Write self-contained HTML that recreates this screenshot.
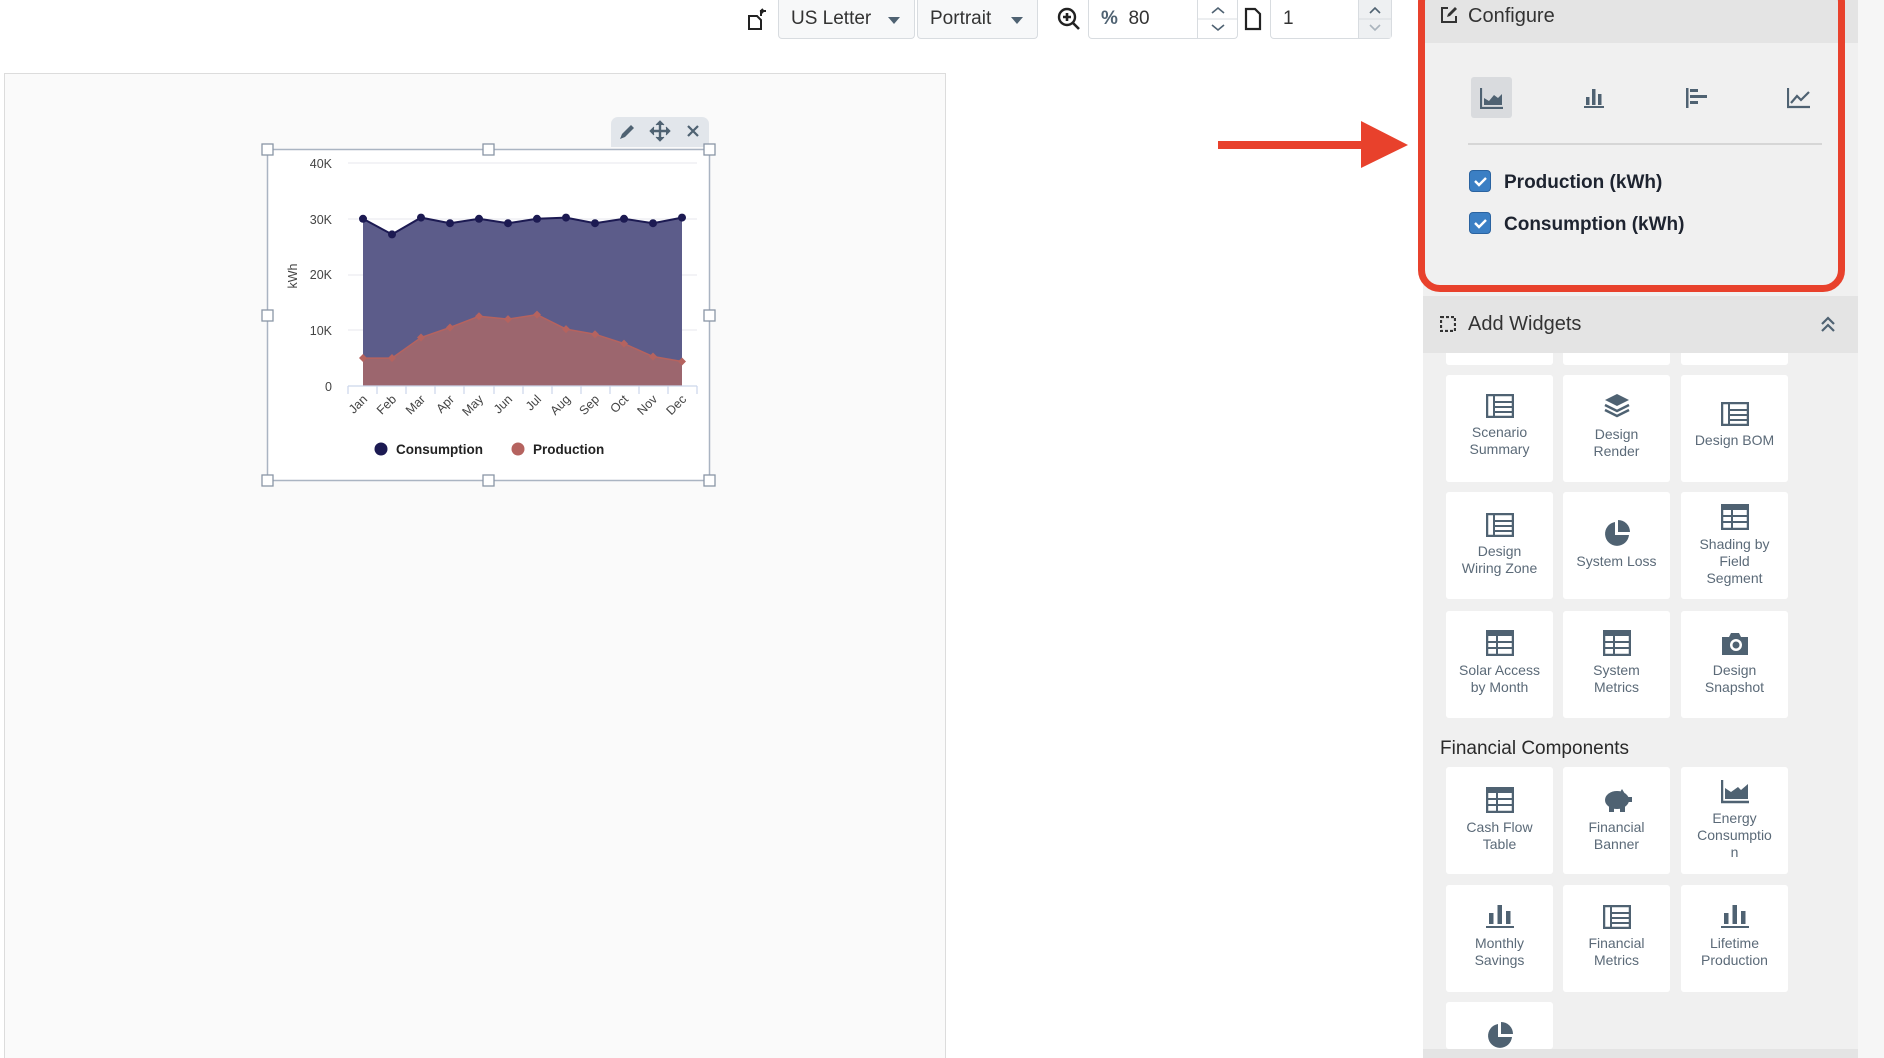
<!DOCTYPE html>
<html><head><meta charset="utf-8">
<style>
*{box-sizing:border-box;margin:0;padding:0}
html,body{width:1884px;height:1058px;overflow:hidden}
body{background:#fff;font-family:"Liberation Sans",sans-serif;position:relative;color:#333}
#wrap{position:relative;width:1884px;height:1058px;overflow:hidden}
.abs{position:absolute}
.page{left:4px;top:73px;width:942px;height:985px;background:#fafafa;border:1px solid #dcdcdc;border-bottom:none}
.dd{top:0;height:39px;border:1px solid #d8dce0;border-top:none;border-radius:0 0 4px 4px;background:#f7f8f9;font-size:19px;color:#333;padding:8px 0 0 12px}
.caret{position:absolute;right:14px;top:17px;width:0;height:0;border-left:6px solid transparent;border-right:6px solid transparent;border-top:7px solid #4f6272}
.inp{top:0;height:39px;border:1px solid #d8dce0;border-top:none;border-radius:0 0 4px 4px;background:#fff;font-size:19px;padding:8px 0 0 12px}
.spin{position:absolute;right:0;top:0;width:33px;height:38px;border-left:1px solid #d8dce0}
.side{left:1423px;top:0;width:435px;height:1058px;background:#f0f0f0}
.tile{position:absolute;width:107px;height:107px;background:#fff;border-radius:3px;text-align:center;font-size:14px;line-height:17px;color:#5b6a78}
.tile svg{display:block;margin:0 auto 6px}
.ic{fill:#4f6272}
</style></head><body><div id="wrap">
<div class="abs" style="left:1858px;top:0;width:26px;height:1058px;background:#f6f6f6"></div>
<div class="abs page"></div>

<svg class="abs" style="left:746px;top:8px" width="24" height="22" viewBox="0 0 24 22"><path d="M3 8h8l4 4v9H3z" fill="none" stroke="#222" stroke-width="2"/><path d="M15 8V3h5M17 1l-2 2 2 2" fill="none" stroke="#222" stroke-width="2"/></svg>
<div class="abs dd" style="left:778px;width:137px">US Letter<span class="caret"></span></div>
<div class="abs dd" style="left:917px;width:121px">Portrait<span class="caret"></span></div>
<svg class="abs" style="left:1057px;top:7px" width="24" height="24" viewBox="0 0 24 24"><circle cx="10" cy="10" r="8" fill="none" stroke="#222" stroke-width="2.4"/><path d="M10 6v8M6 10h8M16 16l6 6" stroke="#222" stroke-width="2.6"/></svg>
<div class="abs inp" style="left:1088px;width:150px"><span style="color:#4f6272;font-weight:bold">%</span>&nbsp; 80<div class="spin" style="width:40px"><svg width="40" height="38"><path d="M14 13l6-5 6 5M14 25l6 5 6-5" fill="none" stroke="#4f6272" stroke-width="1.6"/><path d="M0 19h40" stroke="#d8dce0"/></svg></div></div>
<svg class="abs" style="left:1244px;top:7px" width="18" height="24"><path d="M2 2h9l5 5v15H2z" fill="none" stroke="#222" stroke-width="2.2"/></svg>
<div class="abs inp" style="left:1270px;width:122px">1<div class="spin" style="background:#eef0f2"><svg width="33" height="38"><path d="M11 13l5-5 5 5" fill="none" stroke="#4f6272" stroke-width="1.6"/><path d="M11 25l5 5 5-5" fill="none" stroke="#aab4bd" stroke-width="1.6"/><path d="M0 19h33" stroke="#d8dce0"/></svg></div></div>

<div class="abs side"></div>
<div class="abs" style="left:1423px;top:0;width:435px;height:43px;background:#e4e4e4"></div>
<svg class="abs" style="left:1440px;top:6px" width="18" height="18"><path d="M8 2H2v14h14v-6" fill="none" stroke="#333" stroke-width="2"/><path d="M7 11l1-3 7-7 2 2-7 7z" fill="#333"/></svg>
<div class="abs" style="left:1468px;top:5px;font-size:20px;color:#333">Configure</div>
<div class="abs" style="left:1471px;top:77px;width:41px;height:41px;background:#d9dbde;border-radius:3px"></div>
<svg class="abs" style="left:1480px;top:87px" width="24" height="22"><path d="M1 1v20h22" fill="none" stroke="#4f6272" stroke-width="2.2"/><path d="M4 18V11l5 3 5-6 4 3 4-4v11z" fill="#4f6272"/></svg>
<svg class="abs" style="left:1583px;top:87px" width="22" height="22"><rect x="3" y="10" width="3.5" height="8" class="ic"/><rect x="9" y="2" width="3.5" height="16" class="ic"/><rect x="15" y="7" width="3.5" height="11" class="ic"/><rect x="1" y="19" width="20" height="2" class="ic"/></svg>
<svg class="abs" style="left:1685px;top:87px" width="24" height="22"><rect x="1" y="1" width="2.5" height="20" class="ic"/><rect x="5" y="2" width="8" height="3" class="ic"/><rect x="5" y="8" width="17" height="3" class="ic"/><rect x="5" y="14" width="8" height="3" class="ic"/></svg>
<svg class="abs" style="left:1787px;top:87px" width="24" height="22"><path d="M1 1v19h22" fill="none" stroke="#4f6272" stroke-width="2.2"/><path d="M4 16l6-7 4 4 8-8" fill="none" stroke="#4f6272" stroke-width="2.2"/></svg>
<div class="abs" style="left:1468px;top:143px;width:354px;height:2px;background:#d6d6d6"></div>
<div class="abs" style="left:1469px;top:170px;width:22px;height:22px;background:#3b7fc4;border:1px solid #2a63a0;border-radius:4px"><svg width="20" height="20"><path d="M5 10l4 4 7-7" fill="none" stroke="#fff" stroke-width="2.4"/></svg></div>
<div class="abs" style="left:1469px;top:212px;width:22px;height:22px;background:#3b7fc4;border:1px solid #2a63a0;border-radius:4px"><svg width="20" height="20"><path d="M5 10l4 4 7-7" fill="none" stroke="#fff" stroke-width="2.4"/></svg></div>
<div class="abs" style="left:1504px;top:172px;font-size:19px;font-weight:bold;color:#1e2430">Production (kWh)</div>
<div class="abs" style="left:1504px;top:214px;font-size:19px;font-weight:bold;color:#1e2430">Consumption (kWh)</div>
<div class="abs" style="left:1418px;top:-20px;width:427px;height:312px;border:7px solid #e8412c;border-radius:22px"></div>

<div class="tile" style="left:1446px;top:340px;height:25px;overflow:hidden;font-size:13px;line-height:13px;padding-top:0"><div style="margin-top:-5px">Probability)</div></div>
<div class="tile" style="left:1563px;top:340px;height:25px"></div>
<div class="tile" style="left:1681px;top:340px;height:25px"></div>
<div class="abs" style="left:1423px;top:296px;width:435px;height:57px;background:#e4e4e4"></div>
<svg class="abs" style="left:1440px;top:316px" width="16" height="16"><path d="M1 1h14v14H1z" fill="none" stroke="#333" stroke-width="2.2" stroke-dasharray="3 2"/></svg>
<div class="abs" style="left:1468px;top:313px;font-size:20px;color:#333">Add Widgets</div>
<svg class="abs" style="left:1819px;top:315px" width="18" height="18"><path d="M3 9l6-6 6 6M3 16l6-6 6 6" fill="none" stroke="#4f6272" stroke-width="2.2"/></svg>

<div class="tile" style="left:1446px;top:375px;padding-top:19px"><svg width="28" height="24"><rect x="1" y="1" width="26" height="22" fill="none" stroke="#4f6272" stroke-width="2.5"/><path d="M8 1v22M8 8h19M8 13h19M8 18h19" stroke="#4f6272" stroke-width="2"/></svg>Scenario<br>Summary</div>
<div class="tile" style="left:1563px;top:375px;padding-top:17px"><svg width="28" height="28"><path d="M14 2l12 6-12 6-12-6z" class="ic"/><path d="M2 13l12 6 12-6M2 18l12 6 12-6" fill="none" stroke="#4f6272" stroke-width="2.5"/></svg>Design<br>Render</div>
<div class="tile" style="left:1681px;top:375px;padding-top:27px"><svg width="28" height="24"><rect x="1" y="1" width="26" height="22" fill="none" stroke="#4f6272" stroke-width="2.5"/><path d="M8 1v22M8 8h19M8 13h19M8 18h19" stroke="#4f6272" stroke-width="2"/></svg>Design BOM</div>
<div class="tile" style="left:1446px;top:492px;padding-top:21px"><svg width="28" height="24"><rect x="1" y="1" width="26" height="22" fill="none" stroke="#4f6272" stroke-width="2.5"/><path d="M8 1v22M8 8h19M8 13h19M8 18h19" stroke="#4f6272" stroke-width="2"/></svg>Design<br>Wiring Zone</div>
<div class="tile" style="left:1563px;top:492px;padding-top:27px"><svg width="28" height="28"><path d="M12 3A12 12 0 1 0 26 16H12z" class="ic"/><path d="M15 1v12h12A12 12 0 0 0 15 1z" class="ic"/></svg>System Loss</div>
<div class="tile" style="left:1681px;top:492px;padding-top:12px"><svg width="28" height="26"><rect x="1" y="1" width="26" height="24" fill="none" stroke="#4f6272" stroke-width="2.5"/><rect x="1" y="1" width="26" height="5" class="ic"/><path d="M1 12h26M1 18h26M11 6v19" stroke="#4f6272" stroke-width="2"/></svg>Shading by<br>Field<br>Segment</div>
<div class="tile" style="left:1446px;top:611px;padding-top:19px"><svg width="28" height="26"><rect x="1" y="1" width="26" height="24" fill="none" stroke="#4f6272" stroke-width="2.5"/><rect x="1" y="1" width="26" height="5" class="ic"/><path d="M1 12h26M1 18h26M11 6v19" stroke="#4f6272" stroke-width="2"/></svg>Solar Access<br>by Month</div>
<div class="tile" style="left:1563px;top:611px;padding-top:19px"><svg width="28" height="26"><rect x="1" y="1" width="26" height="24" fill="none" stroke="#4f6272" stroke-width="2.5"/><rect x="1" y="1" width="26" height="5" class="ic"/><path d="M1 12h26M1 18h26M11 6v19" stroke="#4f6272" stroke-width="2"/></svg>System<br>Metrics</div>
<div class="tile" style="left:1681px;top:611px;padding-top:21px"><svg width="28" height="24"><path d="M1 5h7l2-4h8l2 4h7v18H1z" class="ic"/><circle cx="15" cy="13" r="6" fill="#fff"/><circle cx="15" cy="13" r="3.5" class="ic"/></svg>Design<br>Snapshot</div>

<div class="abs" style="left:1440px;top:738px;font-size:19px;color:#2a2a2a">Financial Components</div>
<div class="tile" style="left:1446px;top:767px;padding-top:20px"><svg width="28" height="26"><rect x="1" y="1" width="26" height="24" fill="none" stroke="#4f6272" stroke-width="2.5"/><rect x="1" y="1" width="26" height="5" class="ic"/><path d="M1 12h26M1 18h26M11 6v19" stroke="#4f6272" stroke-width="2"/></svg>Cash Flow<br>Table</div>
<div class="tile" style="left:1563px;top:767px;padding-top:20px"><svg width="30" height="26"><ellipse cx="15" cy="13" rx="12" ry="9" class="ic"/><rect x="7" y="18" width="5" height="7" class="ic"/><rect x="18" y="18" width="5" height="7" class="ic"/><path d="M20 2l3 5-6 0z" class="ic"/><rect x="26" y="10" width="4" height="5" class="ic"/></svg>Financial<br>Banner</div>
<div class="tile" style="left:1681px;top:767px;padding-top:13px"><svg width="28" height="24"><path d="M1 0v22h27" fill="none" stroke="#4f6272" stroke-width="2.5"/><path d="M4 19V8l6 4 7-5 3 3 7-6v15z" class="ic"/></svg>Energy<br>Consumptio<br>n</div>
<div class="tile" style="left:1446px;top:885px;padding-top:18px"><svg width="28" height="26"><rect x="3" y="10" width="4.5" height="11" class="ic"/><rect x="11.5" y="2" width="4.5" height="19" class="ic"/><rect x="20" y="8" width="4.5" height="13" class="ic"/><rect x="0" y="23" width="28" height="2" class="ic"/></svg>Monthly<br>Savings</div>
<div class="tile" style="left:1563px;top:885px;padding-top:20px"><svg width="28" height="24"><rect x="1" y="1" width="26" height="22" fill="none" stroke="#4f6272" stroke-width="2.5"/><path d="M8 1v22M8 8h19M8 13h19M8 18h19" stroke="#4f6272" stroke-width="2"/></svg>Financial<br>Metrics</div>
<div class="tile" style="left:1681px;top:885px;padding-top:18px"><svg width="28" height="26"><rect x="3" y="10" width="4.5" height="11" class="ic"/><rect x="11.5" y="2" width="4.5" height="19" class="ic"/><rect x="20" y="8" width="4.5" height="13" class="ic"/><rect x="0" y="23" width="28" height="2" class="ic"/></svg>Lifetime<br>Production</div>
<div class="tile" style="left:1446px;top:1002px;height:47px;padding-top:19px"><svg width="28" height="28"><path d="M12 3A12 12 0 1 0 26 16H12z" class="ic"/><path d="M15 1v12h12A12 12 0 0 0 15 1z" class="ic"/></svg></div>
<div class="abs" style="left:1423px;top:1049px;width:435px;height:9px;background:#e4e4e4"></div>

<svg class="abs" style="left:0;top:0" width="1884" height="1058" font-family="Liberation Sans, sans-serif">
<path d="M1218 145H1366" stroke="#e8412c" stroke-width="8"/>
<path d="M1361 121L1408 145L1361 168z" fill="#e8412c"/>
<path d="M611 147V124a7 7 0 0 1 7-7h84a7 7 0 0 1 7 7v23z" fill="#e2e6eb"/>
<path d="M620 139l2-5 9-9 3 3-9 9z" fill="#4f6272"/>
<path d="M660 122v18M651 131h18" stroke="#4f6272" stroke-width="2.4"/><path d="M656 125l4-4 4 4M656 137l4 4 4-4M654 127l-4 4 4 4M666 127l4 4-4 4" fill="#4f6272" stroke="#4f6272" stroke-width="1"/>
<path d="M688 126l10 10M698 126l-10 10" stroke="#4f6272" stroke-width="2.2"/>
<rect x="267.5" y="149.5" width="442" height="331" fill="#fff" stroke="#aab4c2" stroke-width="1.5"/>
<g fill="#fff" stroke="#8a96a6" stroke-width="1.3">
<rect x="262" y="144" width="11" height="11"/><rect x="483" y="144" width="11" height="11"/><rect x="704" y="144" width="11" height="11"/>
<rect x="262" y="310" width="11" height="11"/><rect x="704" y="310" width="11" height="11"/>
<rect x="262" y="475" width="11" height="11"/><rect x="483" y="475" width="11" height="11"/><rect x="704" y="475" width="11" height="11"/></g>
<g stroke="#ececf0" stroke-width="1.2"><path d="M348 163H697M348 219H697M348 275H697M348 330H697"/></g>
<g font-size="12.5" fill="#444" text-anchor="end"><text x="332" y="168">40K</text><text x="332" y="224">30K</text><text x="332" y="279">20K</text><text x="332" y="335">10K</text><text x="332" y="391">0</text></g>
<text transform="translate(297,276) rotate(-90)" font-size="12.5" fill="#444" text-anchor="middle">kWh</text>
<path d="M363 218.8L392 234.4L421 217.6L450 223.2L479 218.8L508 223.2L537 218.8L566 217.6L595 223.2L624 218.8L653 223.2L682 217.6V386H363z" fill="#5c5c8a"/>
<path d="M363 218.8L392 234.4L421 217.6L450 223.2L479 218.8L508 223.2L537 218.8L566 217.6L595 223.2L624 218.8L653 223.2L682 217.6" fill="none" stroke="#1c1a52" stroke-width="2"/>
<path d="M363 358.1L392 358.1L421 337.5L450 327.5L479 316.3L508 319.1L537 314.6L566 329.1L595 334.2L624 343.6L653 356.5L682 361.5V386H363z" fill="#9c666e"/>
<path d="M363 358.1L392 358.1L421 337.5L450 327.5L479 316.3L508 319.1L537 314.6L566 329.1L595 334.2L624 343.6L653 356.5L682 361.5" fill="none" stroke="#b5635f" stroke-width="1.5"/>
<g fill="#1c1a52"><circle cx="363" cy="218.8" r="4"/><circle cx="392" cy="234.4" r="4"/><circle cx="421" cy="217.6" r="4"/><circle cx="450" cy="223.2" r="4"/><circle cx="479" cy="218.8" r="4"/><circle cx="508" cy="223.2" r="4"/><circle cx="537" cy="218.8" r="4"/><circle cx="566" cy="217.6" r="4"/><circle cx="595" cy="223.2" r="4"/><circle cx="624" cy="218.8" r="4"/><circle cx="653" cy="223.2" r="4"/><circle cx="682" cy="217.6" r="4"/></g>
<g fill="#b5635f"><path d="M363 354l4 4-4 4-4-4z"/><path d="M392 354l4 4-4 4-4-4z"/><path d="M421 333.5l4 4-4 4-4-4z"/><path d="M450 323.5l4 4-4 4-4-4z"/><path d="M479 312.3l4 4-4 4-4-4z"/><path d="M508 315.1l4 4-4 4-4-4z"/><path d="M537 310.6l4 4-4 4-4-4z"/><path d="M566 325.1l4 4-4 4-4-4z"/><path d="M595 330.2l4 4-4 4-4-4z"/><path d="M624 339.6l4 4-4 4-4-4z"/><path d="M653 352.5l4 4-4 4-4-4z"/><path d="M682 357.5l4 4-4 4-4-4z"/></g>
<path d="M348 386H697M348 386v8M377 386v8M406 386v8M435 386v8M464 386v8M494 386v8M523 386v8M552 386v8M581 386v8M610 386v8M639 386v8M668 386v8M697 386v8" stroke="#ccd6eb" stroke-width="1.2"/>
<g font-size="12.5" fill="#444" text-anchor="end">
<text transform="translate(368,400) rotate(-45)">Jan</text><text transform="translate(397,400) rotate(-45)">Feb</text><text transform="translate(426,400) rotate(-45)">Mar</text><text transform="translate(455,400) rotate(-45)">Apr</text><text transform="translate(484,400) rotate(-45)">May</text><text transform="translate(513,400) rotate(-45)">Jun</text><text transform="translate(542,400) rotate(-45)">Jul</text><text transform="translate(571,400) rotate(-45)">Aug</text><text transform="translate(600,400) rotate(-45)">Sep</text><text transform="translate(629,400) rotate(-45)">Oct</text><text transform="translate(658,400) rotate(-45)">Nov</text><text transform="translate(687,400) rotate(-45)">Dec</text></g>
<circle cx="381" cy="449" r="6.5" fill="#1c1a52"/><text x="396" y="454" font-size="13.5" font-weight="bold" fill="#222">Consumption</text>
<circle cx="518" cy="449" r="6.5" fill="#b5635f"/><text x="533" y="454" font-size="13.5" font-weight="bold" fill="#222">Production</text>
</svg>
</div></body></html>
